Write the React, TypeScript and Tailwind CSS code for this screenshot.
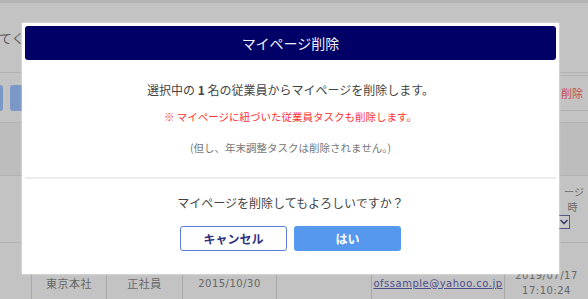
import React from "react";

const font = { fontFamily: '"Noto Sans CJK JP", "Noto Sans", sans-serif' };

export default function App() {
  return (
    <div
      className="relative w-[588px] h-[299px] overflow-hidden bg-[#c3c3c3]"
      style={font}
    >
      {/* background page (dimmed) */}
      <div className="flex flex-col w-[588px]">
        <div className="h-[3px] bg-[#b3b3b3]" />
        <div className="h-[70px] flex items-center border-b border-[#b2b2b2]">
          <span className="ml-[-1px] text-[13px] text-[#5a5a5a]">てく</span>
        </div>
        <div className="h-[50px] flex justify-between border-b border-[#b2b2b2]">
          <div className="flex items-center gap-[7px] ml-[-20px]">
            <div className="w-[23px] h-[26px] rounded-[3px] bg-[#7b97c6]" />
            <div className="w-[30px] h-[26px] rounded-[3px] bg-[#7b97c6]" />
          </div>
          <div className="w-[30px] flex flex-col">
            <div className="mt-[2px] border-t border-[#b2b2b2]" />
            <div className="flex-1 flex items-center pl-[3px] text-[11px] text-[#c84c4c]">
              削除
            </div>
            <div className="border-t border-[#b2b2b2] h-[12px]" />
          </div>
        </div>
        <div className="h-[53px] bg-[#bdbdbd] border-b border-[#b2b2b2]" />
        <div className="h-[67px] flex justify-end border-b border-[#b2b2b2]">
          <div className="w-[32px] flex flex-col items-center pt-[8px] text-[10px] leading-[15px] text-[#6a6a6a]">
            <span className="pl-[4px]">ージ</span>
            <span className="pl-[1px]">時</span>
            <div className="self-start mt-[1px] ml-[1px] w-[13px] h-[14px] border border-[#555588] bg-[#c8c8c8] flex items-center justify-center">
              <svg width="10" height="8" viewBox="0 0 10 8">
                <path d="M1.5 2 L5 5.5 L8.5 2" fill="none" stroke="#333366" strokeWidth="1.4" />
              </svg>
            </div>
          </div>
        </div>
        <div className="h-[80px] flex text-[11px] text-[#666] tracking-[0.5px]">
          <div className="w-[32px] border-r border-[#aaaaaa]" />
          <div className="w-[75px] border-r border-[#aaaaaa] flex items-center justify-center">東京本社</div>
          <div className="w-[76px] border-r border-[#aaaaaa] flex items-center justify-center">正社員</div>
          <div className="w-[94px] border-r border-[#aaaaaa] flex items-center justify-center" style={{ fontFamily: '"DejaVu Sans", sans-serif', fontSize: 10 }}>2015/10/30</div>
          <div className="w-[95px] border-r border-[#aaaaaa]" />
          <div className="w-[133px] border-r border-[#aaaaaa] flex items-center justify-center">
            <span className="underline text-[#4d4d8a]" style={{ fontFamily: '"DejaVu Sans", sans-serif', fontSize: 10 }}>ofssample@yahoo.co.jp</span>
          </div>
          <div className="w-[83px] flex flex-col items-center justify-center leading-[15px]" style={{ fontFamily: '"DejaVu Sans", sans-serif', fontSize: 10 }}>
            <span>2019/07/17</span>
            <span>17:10:24</span>
          </div>
        </div>
      </div>

      {/* modal */}
      <div className="absolute left-[22px] top-[23px] w-[537px] h-[251px] bg-white p-[3px] flex flex-col shadow-[0_0_2px_rgba(255,255,255,0.8)]">
        <div className="h-[34px] rounded-[3px] bg-[#000066] flex items-center justify-center text-[14px] text-[#f0f0f8]">
          マイページ削除
        </div>
        <div className="mt-[21px] text-center text-[12px] leading-[18px] text-[#444]">
          選択中の <span className="font-bold">1</span> 名の従業員からマイページを削除します。
        </div>
        <div className="mt-[10px] text-center text-[10.5px] leading-[16px] text-[#ff3333]">
          <span className="font-bold">※</span> マイページに紐づいた従業員タスクも削除します。
        </div>
        <div className="mt-[15px] text-center text-[10.5px] leading-[16px] text-[#777]">
          (但し、年末調整タスクは削除されません。)
        </div>
        <div className="mt-[21px] h-[2px] bg-[#ececec]" />
        <div className="mt-[15px] text-center text-[12px] leading-[18px] text-[#444]">
          マイページを削除してもよろしいですか？
        </div>
        <div className="mt-[14px] flex justify-center gap-[7px]">
          <button className="w-[107px] h-[25px] rounded-[3px] border border-[#5a7fd8] bg-white text-[12px] font-bold text-[#333380] flex items-center justify-center">
            キャンセル
          </button>
          <button className="w-[107px] h-[25px] rounded-[3px] bg-[#5598ee] text-[12px] font-bold text-white flex items-center justify-center">
            はい
          </button>
        </div>
      </div>
    </div>
  );
}
